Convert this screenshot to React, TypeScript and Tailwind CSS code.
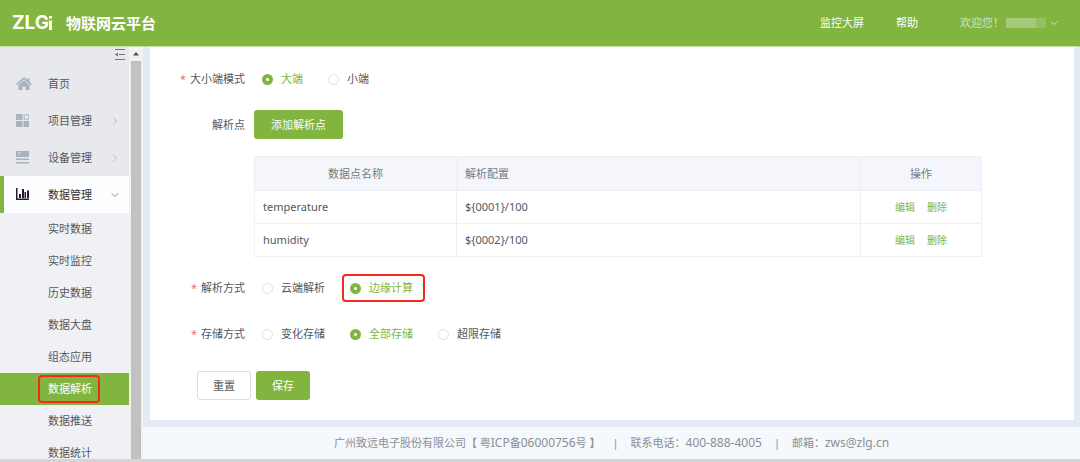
import type { ReactNode } from 'react';

const subItems = ['实时数据', '实时监控', '历史数据', '数据大盘', '组态应用', '数据解析', '数据推送', '数据统计'];

const points = [
  { name: 'temperature', config: '${0001}/100' },
  { name: 'humidity', config: '${0002}/100' },
];

function Chevron({ className, d }: { className: string; d: string }) {
  return (
    <svg className={className} width="8" height="8" viewBox="0 0 10 10" fill="none" stroke="currentColor" strokeWidth="1.2">
      <path d={d} />
    </svg>
  );
}

const RIGHT = 'M3 1l4 4-4 4';
const DOWN = 'M1 3l4 4 4-4';

const HomeIcon = () => (
  <svg width="16" height="13" viewBox="0 0 16 13" fill="#a9b3bf">
    <path d="M8 0L0 7l1.200 1.200L8 2.300l6.800 5.900L16 7l-2.500-2.200V1.300h-2v1.800z" />
    <path d="M8 3.300L2.500 8v5h4V9.500h3V13h4V8z" />
  </svg>
);

const ProjectIcon = () => (
  <svg width="14" height="13" viewBox="0 0 14 13">
    <path d="M0 0h6.500v6H0zM0 7h6.500v6H0zM7.500 7H13v6H7.500z" fill="#a9b3bf" />
    <path d="M7.500 0H13v6H7.500z" fill="#b9c6d2" />
    <path d="M9 1.500h3v3H9z" fill="#e8e9ed" />
  </svg>
);

const DeviceIcon = () => (
  <svg width="14" height="13" viewBox="0 0 14 13">
    <path d="M0 0h13v6H0zM0 7.500h13V9H0zM0 11h13v1.500H0z" fill="#a9b3bf" />
    <path d="M2 1.500h3v1H2z" fill="#e8e9ed" />
  </svg>
);

const DataIcon = () => (
  <svg width="14" height="13" viewBox="0 0 14 13" fill="#2b1a2e">
    <path d="M0 0h1.500v10.500H13V12H0zM3 6h2v4H3zM6 1h2v9H6zM8.500 4h1.500v6H8.500zM11 2.500h2V10h-2z" />
  </svg>
);

function MenuItem({ icon, label, arrow, active }: { icon: ReactNode; label: string; arrow?: string; active?: boolean }) {
  return (
    <a
      href="#"
      className={`flex h-[37px] shrink-0 items-center border-l-4 pr-2.5 ${
        active ? 'border-[#82b440] bg-[#fcfdff] text-[#303133]' : 'border-transparent text-[#55585e]'
      }`}
    >
      <span className="flex w-11 justify-start pl-3">{icon}</span>
      <span className="flex-1">{label}</span>
      {arrow && <Chevron className={active ? 'text-[#83888f]' : 'text-[#b4b9c0]'} d={arrow} />}
    </a>
  );
}

function Radio({ name, label, checked, boxed }: { name: string; label: string; checked?: boolean; boxed?: boolean }) {
  return (
    <label className={`relative flex items-center gap-2 ${checked ? 'text-[#82b440]' : ''}`}>
      <input
        type="radio"
        name={name}
        defaultChecked={checked}
        className="size-[11px] appearance-none rounded-full border border-[#dcdfe6] bg-white checked:border-4 checked:border-[#82b440]"
      />
      {label}
      {boxed && <span className="absolute -inset-y-1.5 -right-3 -left-2 rounded-sm border-2 border-[#f52a1c]" />}
    </label>
  );
}

function FormRow({ label, required, children }: { label: string; required?: boolean; children: ReactNode }) {
  return (
    <div className="flex items-center gap-[9px]">
      <span className="w-[95px] shrink-0 text-right">
        {required && <span className="mr-1 text-[#f56c6c]">*</span>}
        {label}
      </span>
      {children}
    </div>
  );
}

export default function App() {
  return (
    <div className="flex h-screen flex-col overflow-hidden bg-[#e3eaf3] font-['Noto_Sans','Noto_Sans_CJK_SC',sans-serif] text-[11px] leading-4 text-[#55585e]">
      <header className="flex h-[47px] shrink-0 items-center border-b border-[#c9dfab] bg-[#82b440] pr-[22px] pl-3 text-white">
        <span className="flex items-center font-['Inter',sans-serif] text-[19px] font-bold">
          ZLG
          <svg width="3" height="14" viewBox="0 0 3 14" fill="currentColor">
            <path d="M0 0h3v2.500H0zM0 4.500h3V14H0z" />
          </svg>
        </span>
        <h1 className="ml-3.5 text-[15px] font-bold">物联网云平台</h1>
        <nav className="ml-auto flex items-center">
          <a href="#" className="mr-8">监控大屏</a>
          <a href="#" className="mr-[42px]">帮助</a>
          <button className="flex items-center text-[#c3e6cf]">
            欢迎您！
            <span className="mr-1 ml-0.5 flex h-2.5 w-10">
              <span className="flex-3 bg-[#a5c97a]" />
              <span className="flex-1 bg-[#95bf60]" />
            </span>
            <Chevron className="" d={DOWN} />
          </button>
        </nav>
      </header>

      <div className="flex min-h-0 flex-1">
        <aside className="flex w-[129px] shrink-0 flex-col overflow-hidden bg-[#e8e9ed]">
          <button className="flex h-[18px] shrink-0 items-start justify-end pt-0.5 pr-1" aria-label="收起">
            <svg width="10" height="11" viewBox="0 0 10 11" fill="none" stroke="#73777d">
              <path d="M0 .5h10M4 5.500h6M0 10.500h10M0 5.500h3" />
              <path d="M0 5.500L3 3.500v4z" fill="#73777d" stroke="none" />
            </svg>
          </button>
          <MenuItem icon={<HomeIcon />} label="首页" />
          <MenuItem icon={<ProjectIcon />} label="项目管理" arrow={RIGHT} />
          <MenuItem icon={<DeviceIcon />} label="设备管理" arrow={RIGHT} />
          <MenuItem icon={<DataIcon />} label="数据管理" arrow={DOWN} active />
          <div className="bg-[#f0f1f5] leading-3">
            {subItems.map(item =>
              item === '数据解析' ? (
                <a key={item} href="#" className="flex h-8 items-center bg-[#82b440] pl-12 text-white">
                  <span className="relative">
                    {item}
                    <span className="absolute -inset-y-2 -right-2 -left-2.5 rounded-sm border-2 border-[#f52a1c]" />
                  </span>
                </a>
              ) : (
                <a key={item} href="#" className="flex h-8 items-center pl-12">{item}</a>
              )
            )}
          </div>
        </aside>

        {/* scrollbar */}
        <div className="flex w-3.5 shrink-0 flex-col bg-[#f1f1f1] px-px">
          <svg className="h-3.5 w-full shrink-0" viewBox="0 0 12 14" fill="#505050">
            <path d="M3 8.500L6 5l3 3.500z" />
          </svg>
          <div className="mr-px ml-px flex-1 bg-[#c1c1c1]" />
        </div>

        <div className="flex min-w-0 flex-1 flex-col">
          <main className="mr-px ml-[7px] flex-1 border-r-[5px] border-[#e3eaf3] bg-white pt-6">
            <FormRow label="大小端模式" required>
              <div className="flex gap-[25px] pl-2">
                <Radio name="endian" label="大端" checked />
                <Radio name="endian" label="小端" />
              </div>
            </FormRow>
            <div className="mt-[23px]">
              <FormRow label="解析点">
                <button className="h-[29px] rounded-[3px] bg-[#82b440] px-[17px] text-white">添加解析点</button>
              </FormRow>
            </div>

            <div className="mt-[17px] mr-[92px] ml-[104px]">
              <table className="w-full table-fixed border-collapse">
                <thead>
                  <tr className="h-[34px] bg-[#f4f6fb] text-[#777b82]">
                    <th className="w-[202px] border border-[#eef0f6] font-normal">数据点名称</th>
                    <th className="border border-[#eef0f6] px-2 text-left font-normal">解析配置</th>
                    <th className="w-[121px] border border-[#eef0f6] font-normal">操作</th>
                  </tr>
                </thead>
                <tbody>
                  {points.map(p => (
                    <tr key={p.name} className="h-[33px]">
                      <td className="border border-[#eef0f6] px-2">{p.name}</td>
                      <td className="border border-[#eef0f6] px-2">{p.config}</td>
                      <td className="border border-[#eef0f6]">
                        <div className="flex justify-center gap-3 text-[10px] text-[#82b440]">
                          <button>编辑</button>
                          <button>删除</button>
                        </div>
                      </td>
                    </tr>
                  ))}
                </tbody>
              </table>
            </div>

            <div className="mt-[23px]">
              <FormRow label="解析方式" required>
                <div className="flex gap-[25px] pl-2">
                  <Radio name="parse" label="云端解析" />
                  <Radio name="parse" label="边缘计算" checked boxed />
                </div>
              </FormRow>
            </div>
            <div className="mt-[30px]">
              <FormRow label="存储方式" required>
                <div className="flex gap-[25px] pl-2">
                  <Radio name="store" label="变化存储" />
                  <Radio name="store" label="全部存储" checked />
                  <Radio name="store" label="超限存储" />
                </div>
              </FormRow>
            </div>

            <div className="mt-[29px] ml-[47px] flex gap-[5px]">
              <button className="h-[29px] rounded-[3px] border border-[#dcdfe6] bg-white px-[15px]">重置</button>
              <button className="h-[29px] rounded-[3px] bg-[#82b440] px-4 text-white">保存</button>
            </div>
          </main>

          <footer className="mt-[7px] flex h-8 shrink-0 items-center justify-center bg-[#f5f8fc] text-[#8c8f94]">
            <span>
              广州致远电子股份有限公司【 粤<span className="text-xs">ICP</span>备<span className="text-xs">06000756</span>号 】
            </span>
            <span className="mx-3">|</span>
            <span>联系电话：<span className="text-xs">400-888-4005</span></span>
            <span className="mx-3">|</span>
            <span>邮箱：<span className="text-xs">zws@zlg.cn</span></span>
          </footer>
        </div>
      </div>
      <div className="h-[3px] shrink-0 bg-[#d3d5da]" />
    </div>
  );
}
